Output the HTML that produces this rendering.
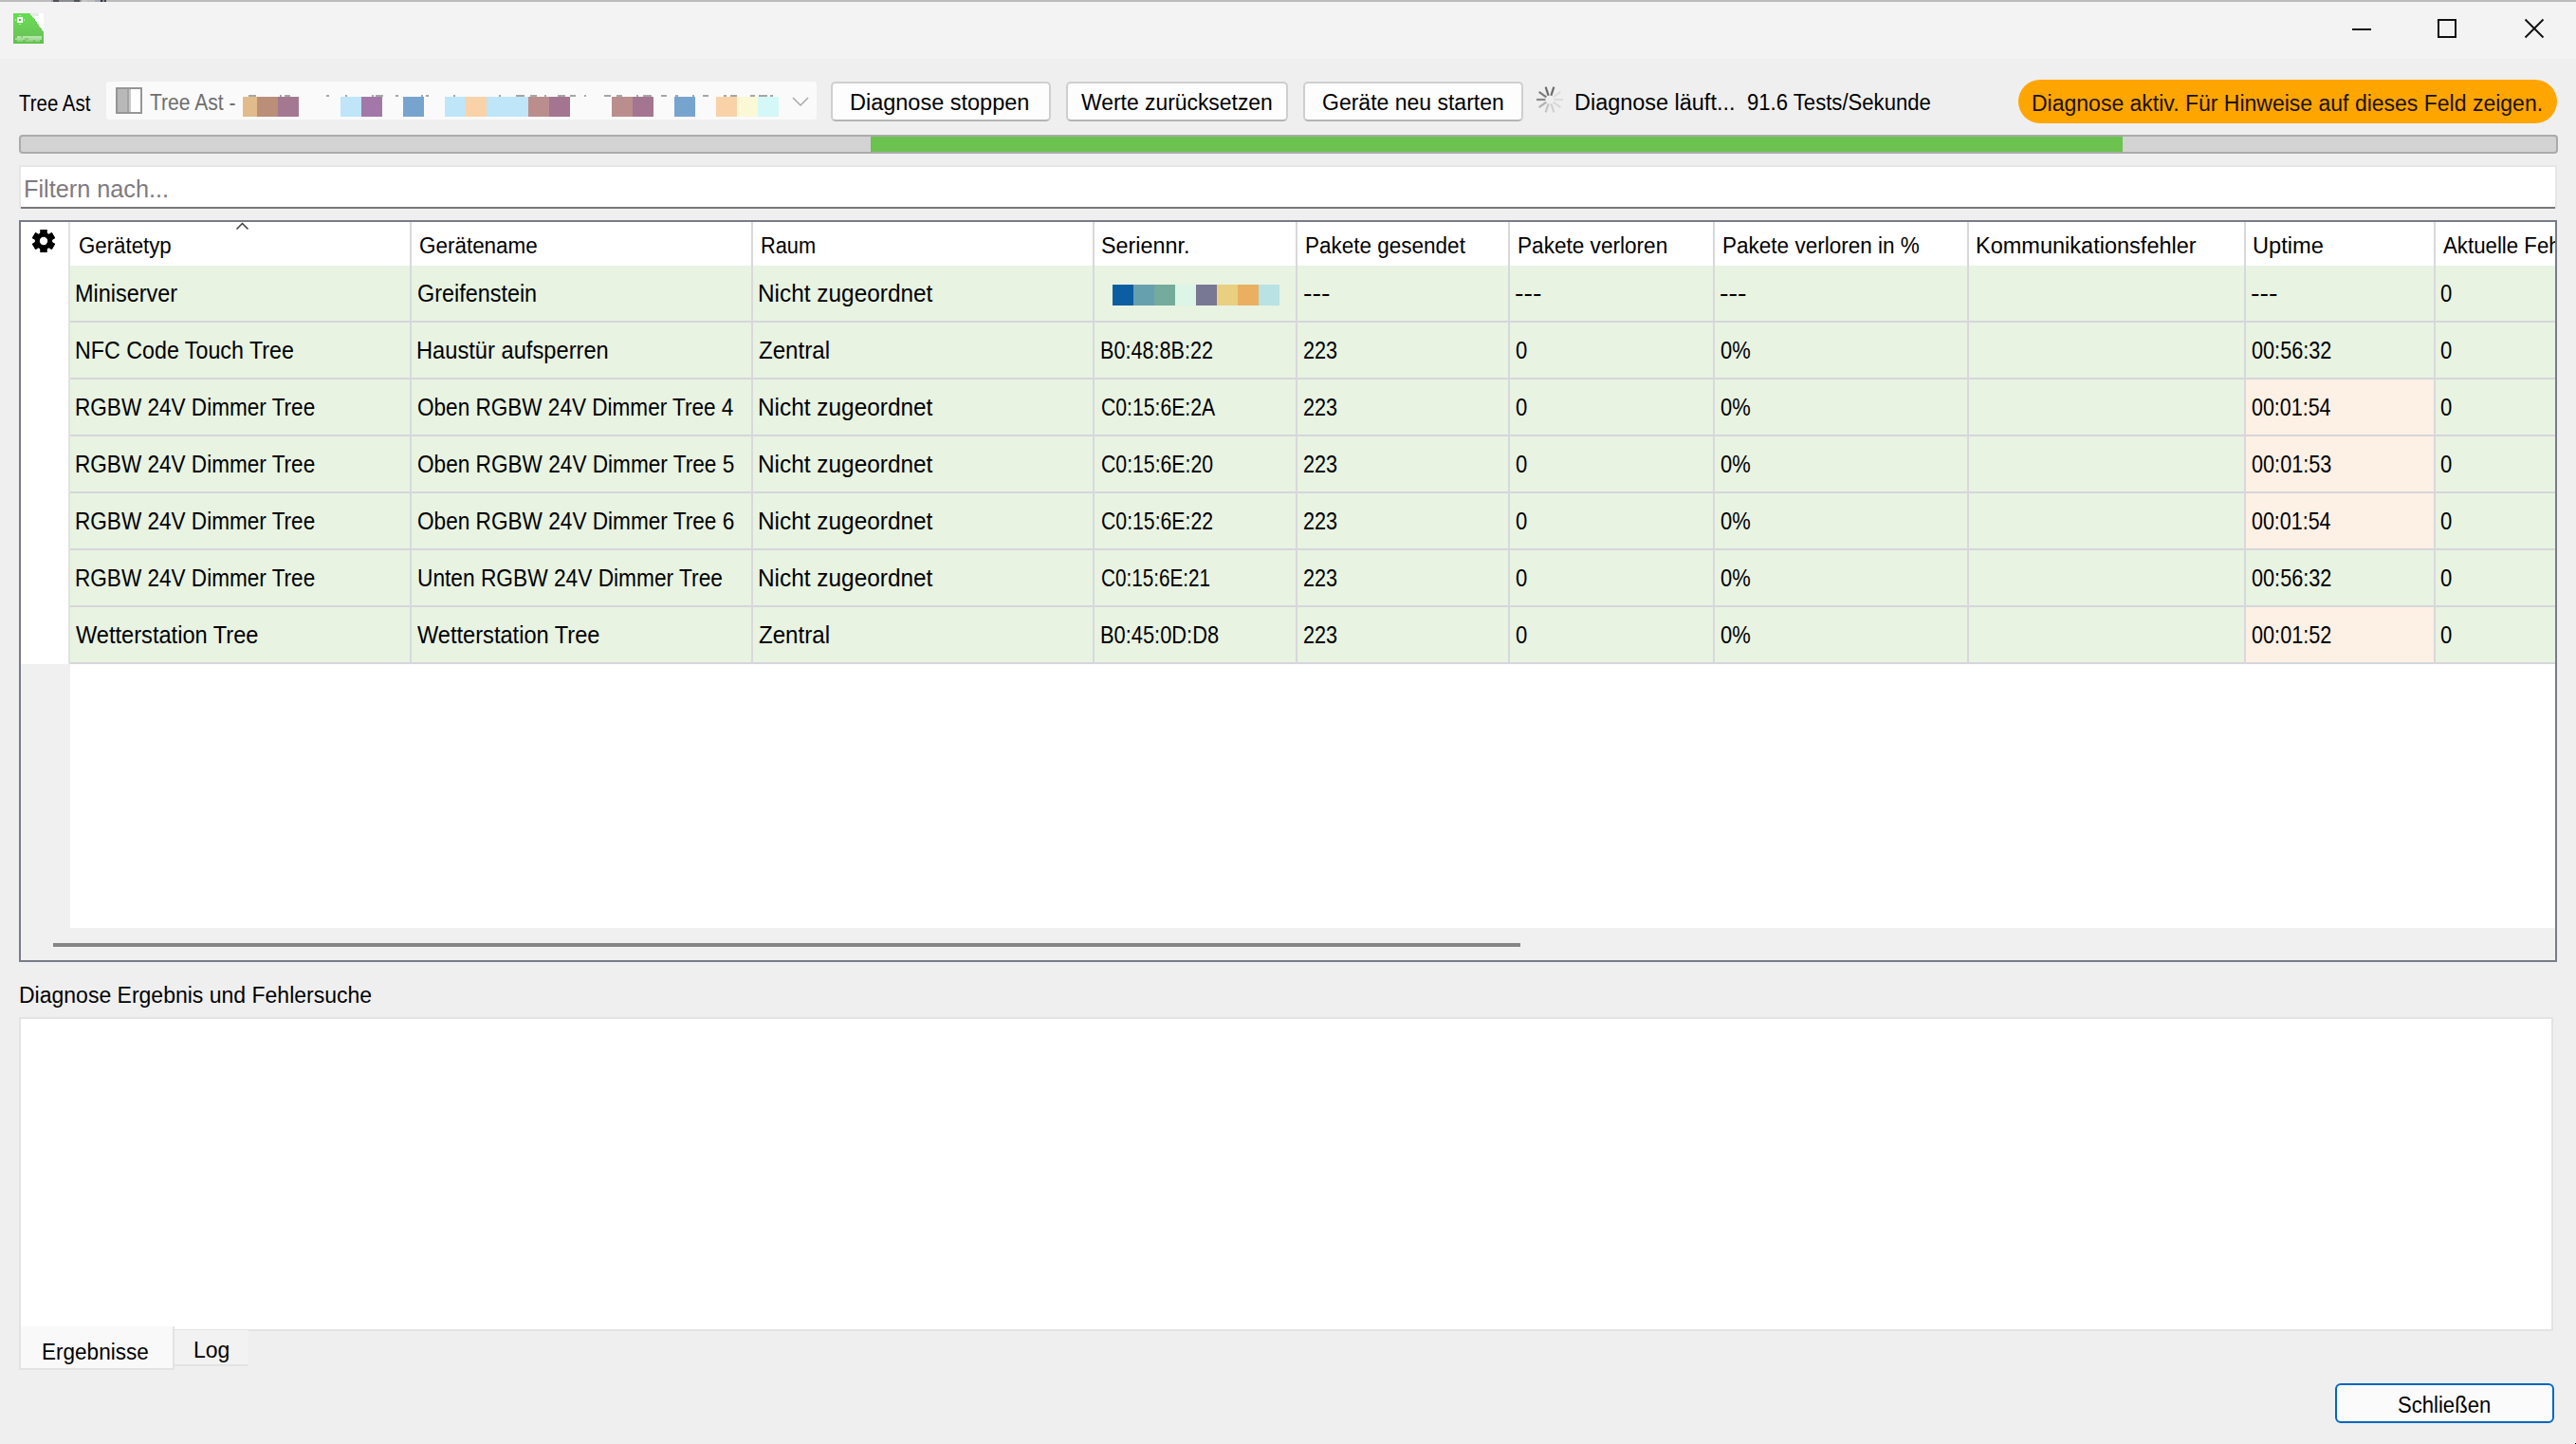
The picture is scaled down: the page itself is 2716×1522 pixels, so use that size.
<!DOCTYPE html>
<html><head><meta charset="utf-8"><style>
html,body{margin:0;padding:0;}
body{width:2716px;height:1522px;background:#efefef;position:relative;overflow:hidden;font-family:"Liberation Sans",sans-serif;}
.r{position:absolute;}
.t{position:absolute;white-space:pre;transform-origin:0 0;}
</style></head><body>
<div class="r" style="left:0px;top:0px;width:2716px;height:62px;background:#f3f3f3;"></div>
<div class="r" style="left:0px;top:0px;width:2716px;height:2px;background:#bcbcbc;"></div>
<div class="r" style="left:54px;top:0px;width:2px;height:2px;background:#a8a8a8;"></div>
<div class="r" style="left:56px;top:0px;width:6px;height:2px;background:#505358;"></div>
<div class="r" style="left:62px;top:0px;width:16px;height:2px;background:#8a8c90;"></div>
<div class="r" style="left:78px;top:0px;width:6px;height:2px;background:#505358;"></div>
<div class="r" style="left:84px;top:0px;width:2px;height:2px;background:#999;"></div>
<div class="r" style="left:86px;top:0px;width:6px;height:2px;background:#c4c4c4;"></div>
<div class="r" style="left:100px;top:0px;width:2px;height:2px;background:#aaa;"></div>
<div class="r" style="left:102px;top:0px;width:4px;height:2px;background:#a0a8c0;"></div>
<div class="r" style="left:106px;top:0px;width:2px;height:2px;background:#333;"></div>
<div class="r" style="left:108px;top:0px;width:2px;height:2px;background:#888;"></div>
<div class="r" style="left:110px;top:0px;width:2px;height:2px;background:#444;"></div>
<div class="r" style="left:2715px;top:1521px;width:1px;height:1px;background:#000;"></div>
<svg class="r" style="left:14px;top:14px" width="32" height="32" viewBox="0 0 32 32" shape-rendering="crispEdges">
<defs><linearGradient id="lg" x1="0" y1="0" x2="0" y2="1"><stop offset="0" stop-color="#5ee04c"/><stop offset="0.3" stop-color="#6ad456"/><stop offset="0.75" stop-color="#68c656"/><stop offset="1" stop-color="#5cc24a"/></linearGradient></defs>
<path d="M0 0H18V2H20V4H22V6H24V8H26V10H28V12H30V14H32V32H0Z" fill="url(#lg)"/>
<path d="M18 0H32V20H30V18H28V16H26V14H24V12H22V10H20V6H18Z" fill="#ffffff" opacity="0"/>
<rect x="18" y="0" width="14" height="20" fill="#fff" opacity="0"/>
<polygon points="18,0 32,0 32,20" fill="#ffffff"/>
<rect x="19" y="0" width="8" height="3" fill="#e9e9e9"/>
<rect x="4" y="4" width="6" height="6" fill="#fff"/><rect x="6" y="6" width="2" height="2" fill="#4cc43a"/>
<rect x="6" y="2" width="2" height="1" fill="#b8eab0"/><rect x="6" y="11" width="2" height="1" fill="#b8eab0"/>
<rect x="2" y="6" width="1" height="2" fill="#b8eab0"/><rect x="11" y="6" width="1" height="2" fill="#b8eab0"/>
<rect x="4" y="24" width="26" height="2" fill="#b4e4a8"/>
<rect x="2" y="26" width="28" height="2" fill="#a8dc9c"/>
<rect x="4" y="28" width="24" height="2" fill="#8fd47f"/>
<rect x="8" y="24" width="2" height="2" fill="#7fcf6c"/><rect x="12" y="26" width="4" height="2" fill="#7fcf6c"/>
<rect x="10" y="28" width="3" height="2" fill="#6cc85a"/><rect x="21" y="28" width="2" height="2" fill="#6cc85a"/>
</svg>
<div class="r" style="left:2480px;top:30px;width:20px;height:2px;background:#111;"></div>
<div class="r" style="left:2570px;top:20px;width:20px;height:20px;background:transparent;box-sizing:border-box;border:2px solid #111;"></div>
<svg class="r" style="left:2660px;top:18px" width="24" height="24" viewBox="0 0 24 24"><path d="M2.5 2.5L21.5 21.5M21.5 2.5L2.5 21.5" stroke="#111" stroke-width="1.9" fill="none"/></svg>
<div class="r" style="left:112px;top:86px;width:749px;height:40px;background:#fafafa;border-radius:3px;"></div>
<svg class="r" style="left:122px;top:92px" width="28" height="28" viewBox="0 0 28 28">
<rect x="1" y="1" width="26" height="26" fill="#fff" stroke="#959595" stroke-width="2"/>
<rect x="2" y="2" width="10" height="24" fill="#b8b8b8"/><rect x="12" y="2" width="2" height="24" fill="#a4a4a4"/><rect x="14" y="2" width="2" height="24" fill="#c8c8c8"/>
</svg>
<div class="r" style="left:256px;top:102px;width:15px;height:21px;background:#e2bb8c;"></div>
<div class="r" style="left:271px;top:102px;width:22px;height:21px;background:#bb8e78;"></div>
<div class="r" style="left:293px;top:102px;width:22px;height:21px;background:#a47890;"></div>
<div class="r" style="left:359px;top:102px;width:22px;height:21px;background:#bee5f8;"></div>
<div class="r" style="left:381px;top:102px;width:22px;height:21px;background:#a278a8;"></div>
<div class="r" style="left:425px;top:102px;width:22px;height:21px;background:#77a4cf;"></div>
<div class="r" style="left:469px;top:102px;width:22px;height:21px;background:#bee5f8;"></div>
<div class="r" style="left:491px;top:102px;width:22px;height:21px;background:#f9d2a8;"></div>
<div class="r" style="left:513px;top:102px;width:44px;height:21px;background:#bee5f8;"></div>
<div class="r" style="left:557px;top:102px;width:22px;height:21px;background:#bb8e8e;"></div>
<div class="r" style="left:579px;top:102px;width:22px;height:21px;background:#a37590;"></div>
<div class="r" style="left:645px;top:102px;width:22px;height:21px;background:#bb8e8e;"></div>
<div class="r" style="left:667px;top:102px;width:22px;height:21px;background:#a37590;"></div>
<div class="r" style="left:711px;top:102px;width:22px;height:21px;background:#77a4cf;"></div>
<div class="r" style="left:755px;top:102px;width:22px;height:21px;background:#f9d2a8;"></div>
<div class="r" style="left:777px;top:102px;width:22px;height:21px;background:#fbf8d5;"></div>
<div class="r" style="left:799px;top:102px;width:22px;height:21px;background:#d4f7f7;"></div>
<div class="r" style="left:262px;top:100px;width:8px;height:2px;background:#8a8a8a;opacity:0.75;"></div>
<div class="r" style="left:295px;top:100px;width:2px;height:2px;background:#8a8a8a;opacity:0.75;"></div>
<div class="r" style="left:300px;top:100px;width:6px;height:2px;background:#8a8a8a;opacity:0.75;"></div>
<div class="r" style="left:344px;top:100px;width:3px;height:2px;background:#8a8a8a;opacity:0.75;"></div>
<div class="r" style="left:364px;top:100px;width:2px;height:2px;background:#8a8a8a;opacity:0.75;"></div>
<div class="r" style="left:392px;top:100px;width:2px;height:2px;background:#8a8a8a;opacity:0.75;"></div>
<div class="r" style="left:396px;top:100px;width:8px;height:2px;background:#8a8a8a;opacity:0.75;"></div>
<div class="r" style="left:417px;top:100px;width:3px;height:2px;background:#8a8a8a;opacity:0.75;"></div>
<div class="r" style="left:444px;top:100px;width:2px;height:2px;background:#8a8a8a;opacity:0.75;"></div>
<div class="r" style="left:449px;top:100px;width:3px;height:2px;background:#8a8a8a;opacity:0.75;"></div>
<div class="r" style="left:478px;top:100px;width:2px;height:2px;background:#8a8a8a;opacity:0.75;"></div>
<div class="r" style="left:526px;top:100px;width:2px;height:2px;background:#8a8a8a;opacity:0.75;"></div>
<div class="r" style="left:544px;top:100px;width:9px;height:2px;background:#8a8a8a;opacity:0.75;"></div>
<div class="r" style="left:559px;top:100px;width:7px;height:2px;background:#8a8a8a;opacity:0.75;"></div>
<div class="r" style="left:574px;top:100px;width:2px;height:2px;background:#8a8a8a;opacity:0.75;"></div>
<div class="r" style="left:588px;top:100px;width:8px;height:2px;background:#8a8a8a;opacity:0.75;"></div>
<div class="r" style="left:601px;top:100px;width:6px;height:2px;background:#8a8a8a;opacity:0.75;"></div>
<div class="r" style="left:616px;top:100px;width:2px;height:2px;background:#8a8a8a;opacity:0.75;"></div>
<div class="r" style="left:637px;top:100px;width:7px;height:2px;background:#8a8a8a;opacity:0.75;"></div>
<div class="r" style="left:650px;top:100px;width:6px;height:2px;background:#8a8a8a;opacity:0.75;"></div>
<div class="r" style="left:671px;top:100px;width:2px;height:2px;background:#8a8a8a;opacity:0.75;"></div>
<div class="r" style="left:678px;top:100px;width:9px;height:2px;background:#8a8a8a;opacity:0.75;"></div>
<div class="r" style="left:697px;top:100px;width:6px;height:2px;background:#8a8a8a;opacity:0.75;"></div>
<div class="r" style="left:712px;top:100px;width:3px;height:2px;background:#8a8a8a;opacity:0.75;"></div>
<div class="r" style="left:730px;top:100px;width:2px;height:2px;background:#8a8a8a;opacity:0.75;"></div>
<div class="r" style="left:741px;top:100px;width:6px;height:2px;background:#8a8a8a;opacity:0.75;"></div>
<div class="r" style="left:763px;top:100px;width:3px;height:2px;background:#8a8a8a;opacity:0.75;"></div>
<div class="r" style="left:770px;top:100px;width:7px;height:2px;background:#8a8a8a;opacity:0.75;"></div>
<div class="r" style="left:791px;top:100px;width:5px;height:2px;background:#8a8a8a;opacity:0.75;"></div>
<div class="r" style="left:800px;top:100px;width:9px;height:2px;background:#8a8a8a;opacity:0.75;"></div>
<div class="r" style="left:812px;top:100px;width:3px;height:2px;background:#8a8a8a;opacity:0.75;"></div>
<svg class="r" style="left:834px;top:101px" width="20" height="13" viewBox="0 0 20 13"><path d="M2 2L10 10L18 2" stroke="#a8a8a8" stroke-width="1.5" fill="none"/></svg>
<div class="r" style="left:876px;top:86px;width:232px;height:42px;background:#fdfdfd;box-sizing:border-box;border:2px solid #cfcfcf;border-bottom-color:#b5b5b5;border-radius:5px;"></div>
<div class="r" style="left:1124px;top:86px;width:234px;height:42px;background:#fdfdfd;box-sizing:border-box;border:2px solid #cfcfcf;border-bottom-color:#b5b5b5;border-radius:5px;"></div>
<div class="r" style="left:1374px;top:86px;width:232px;height:42px;background:#fdfdfd;box-sizing:border-box;border:2px solid #cfcfcf;border-bottom-color:#b5b5b5;border-radius:5px;"></div>
<svg class="r" style="left:1618px;top:89px" width="32" height="32" viewBox="-16 -16 32 32"><line x1="1.39" y1="-4.28" x2="4.33" y2="-13.31" stroke="#6a6a6a" stroke-width="2.2"/><line x1="-1.39" y1="-4.28" x2="-4.33" y2="-13.31" stroke="#6a6a6a" stroke-width="2.2"/><line x1="-3.64" y1="-2.65" x2="-11.33" y2="-8.23" stroke="#7a7a7a" stroke-width="2.2"/><line x1="-4.50" y1="-0.00" x2="-14.00" y2="-0.00" stroke="#8a8a8a" stroke-width="2.2"/><line x1="-3.64" y1="2.65" x2="-11.33" y2="8.23" stroke="#b0b0b0" stroke-width="2.2"/><line x1="-1.39" y1="4.28" x2="-4.33" y2="13.31" stroke="#c4c4c4" stroke-width="2.2"/><line x1="1.39" y1="4.28" x2="4.33" y2="13.31" stroke="#d0d0d0" stroke-width="2.2"/><line x1="3.64" y1="2.65" x2="11.33" y2="8.23" stroke="#d8d8d8" stroke-width="2.2"/><line x1="4.50" y1="-0.00" x2="14.00" y2="-0.00" stroke="#dcdcdc" stroke-width="2.2"/><line x1="3.64" y1="-2.65" x2="11.33" y2="-8.23" stroke="#dedede" stroke-width="2.2"/></svg>
<div class="r" style="left:2128px;top:84px;width:568px;height:46px;background:#ffa500;border-radius:23px;"></div>
<div class="r" style="left:20px;top:142px;width:2677px;height:20px;background:#d3d3d3;box-sizing:border-box;border:2px solid #ababab;border-radius:4px;"></div>
<div class="r" style="left:918px;top:144px;width:1320px;height:16px;background:#6cc24f;"></div>
<div class="r" style="left:20px;top:174px;width:2676px;height:46px;background:#ffffff;box-sizing:border-box;border:2px solid #e6e6e6;border-bottom:none;"></div>
<div class="r" style="left:22px;top:218px;width:2672px;height:2px;background:#787878;"></div>
<div class="r" style="left:20px;top:232px;width:2676px;height:782px;background:#ffffff;box-sizing:border-box;border:2px solid #787c88;"></div>
<div class="r" style="left:22px;top:700px;width:52px;height:278px;background:#f0f0f0;"></div>
<div class="r" style="left:22px;top:978px;width:2672px;height:34px;background:#f0f0f0;"></div>
<div class="r" style="left:56px;top:994px;width:1547px;height:4px;background:#858585;"></div>
<div class="r" style="left:74px;top:280px;width:2620px;height:58px;background:#e8f3e2;"></div>
<div class="r" style="left:74px;top:338px;width:2620px;height:2px;background:#d6d6da;"></div>
<div class="r" style="left:74px;top:340px;width:2620px;height:58px;background:#e8f3e2;"></div>
<div class="r" style="left:74px;top:398px;width:2620px;height:2px;background:#d6d6da;"></div>
<div class="r" style="left:74px;top:400px;width:2620px;height:58px;background:#e8f3e2;"></div>
<div class="r" style="left:74px;top:458px;width:2620px;height:2px;background:#d6d6da;"></div>
<div class="r" style="left:2368px;top:400px;width:199px;height:58px;background:#fdf0e4;"></div>
<div class="r" style="left:74px;top:460px;width:2620px;height:58px;background:#e8f3e2;"></div>
<div class="r" style="left:74px;top:518px;width:2620px;height:2px;background:#d6d6da;"></div>
<div class="r" style="left:2368px;top:460px;width:199px;height:58px;background:#fdf0e4;"></div>
<div class="r" style="left:74px;top:520px;width:2620px;height:58px;background:#e8f3e2;"></div>
<div class="r" style="left:74px;top:578px;width:2620px;height:2px;background:#d6d6da;"></div>
<div class="r" style="left:2368px;top:520px;width:199px;height:58px;background:#fdf0e4;"></div>
<div class="r" style="left:74px;top:580px;width:2620px;height:58px;background:#e8f3e2;"></div>
<div class="r" style="left:74px;top:638px;width:2620px;height:2px;background:#d6d6da;"></div>
<div class="r" style="left:74px;top:640px;width:2620px;height:58px;background:#e8f3e2;"></div>
<div class="r" style="left:74px;top:698px;width:2620px;height:2px;background:#d6d6da;"></div>
<div class="r" style="left:2368px;top:640px;width:199px;height:58px;background:#fdf0e4;"></div>
<div class="r" style="left:72px;top:234px;width:2px;height:466px;background:#e2e2e2;"></div>
<div class="r" style="left:432px;top:234px;width:2px;height:466px;background:#d8d8dc;"></div>
<div class="r" style="left:792px;top:234px;width:2px;height:466px;background:#d8d8dc;"></div>
<div class="r" style="left:1152px;top:234px;width:2px;height:466px;background:#d8d8dc;"></div>
<div class="r" style="left:1366px;top:234px;width:2px;height:466px;background:#d8d8dc;"></div>
<div class="r" style="left:1590px;top:234px;width:2px;height:466px;background:#d8d8dc;"></div>
<div class="r" style="left:1806px;top:234px;width:2px;height:466px;background:#d8d8dc;"></div>
<div class="r" style="left:2074px;top:234px;width:2px;height:466px;background:#d8d8dc;"></div>
<div class="r" style="left:2366px;top:234px;width:2px;height:466px;background:#d8d8dc;"></div>
<div class="r" style="left:2566px;top:234px;width:2px;height:466px;background:#d8d8dc;"></div>
<svg class="r" style="left:34px;top:242px" width="24" height="24" viewBox="0 0 24 24"><g fill="#000"><rect x="8.5" y="0" width="7" height="24" transform="rotate(0 12 12)"/><rect x="8.5" y="0" width="7" height="24" transform="rotate(60 12 12)"/><rect x="8.5" y="0" width="7" height="24" transform="rotate(120 12 12)"/><rect x="8.5" y="0" width="7" height="24" transform="rotate(180 12 12)"/><rect x="8.5" y="0" width="7" height="24" transform="rotate(240 12 12)"/><rect x="8.5" y="0" width="7" height="24" transform="rotate(300 12 12)"/><circle cx="12" cy="12" r="9.2"/></g><circle cx="12" cy="12" r="4.2" fill="#fff"/></svg>
<svg class="r" style="left:246px;top:232px" width="20" height="14" viewBox="0 0 20 14"><path d="M3.5 9.5L9.5 3.5L15.5 9.5" stroke="#3c3c3c" stroke-width="1.5" fill="none"/></svg>
<div class="r" style="left:1173px;top:300px;width:22px;height:22px;background:#0b5fa0;"></div>
<div class="r" style="left:1195px;top:300px;width:22px;height:22px;background:#66a0ae;"></div>
<div class="r" style="left:1217px;top:300px;width:22px;height:22px;background:#74ab9c;"></div>
<div class="r" style="left:1239px;top:300px;width:22px;height:22px;background:#dcf5e6;"></div>
<div class="r" style="left:1261px;top:300px;width:22px;height:22px;background:#787894;"></div>
<div class="r" style="left:1283px;top:300px;width:22px;height:22px;background:#e8d080;"></div>
<div class="r" style="left:1305px;top:300px;width:22px;height:22px;background:#e8b060;"></div>
<div class="r" style="left:1327px;top:300px;width:22px;height:22px;background:#b8e2e4;"></div>
<div class="r" style="left:20px;top:1072px;width:2672px;height:331px;background:#ffffff;box-sizing:border-box;border:2px solid #e3e3e3;"></div>
<div class="r" style="left:184px;top:1402px;width:78px;height:38px;background:#f2f2f2;box-sizing:border-box;border-bottom:2px solid #e3e3e3;"></div>
<div class="r" style="left:20px;top:1398px;width:164px;height:46px;background:#f9f9f9;box-sizing:border-box;border:2px solid #e3e3e3;border-top:none;"></div>
<div class="r" style="left:2462px;top:1458px;width:231px;height:42px;background:#fbfbfb;box-sizing:border-box;border:2px solid #0067c0;border-radius:6px;"></div>
<div class="t" style="left:20.00px;top:97.53px;font-size:23.0px;line-height:23.0px;color:#000;transform:scaleX(0.8884);">Tree Ast</div>
<div class="t" style="left:158.00px;top:96.83px;font-size:23.0px;line-height:23.0px;color:#6e6e6e;transform:scaleX(0.9150);">Tree Ast -</div>
<div class="t" style="left:896.48px;top:97.33px;font-size:23.0px;line-height:23.0px;color:#000;transform:scaleX(1.0211);">Diagnose stoppen</div>
<div class="t" style="left:1140.00px;top:97.33px;font-size:23.0px;line-height:23.0px;color:#000;transform:scaleX(0.9949);">Werte zurücksetzen</div>
<div class="t" style="left:1394.00px;top:97.33px;font-size:23.0px;line-height:23.0px;color:#000;">Geräte neu starten</div>
<div class="t" style="left:1659.98px;top:97.33px;font-size:23.0px;line-height:23.0px;color:#000;transform:scaleX(1.0194);">Diagnose läuft...</div>
<div class="t" style="left:1841.54px;top:97.33px;font-size:23.0px;line-height:23.0px;color:#000;transform:scaleX(0.9614);">91.6 Tests/Sekunde</div>
<div class="t" style="left:2142.00px;top:97.53px;font-size:23.0px;line-height:23.0px;color:#1a1200;">Diagnose aktiv. Für Hinweise auf dieses Feld zeigen.</div>
<div class="t" style="left:25.01px;top:186.99px;font-size:25.4px;line-height:25.4px;color:#7d7a80;transform:scaleX(0.9949);">Filtern nach...</div>
<div class="t" style="left:83.03px;top:247.53px;font-size:23.0px;line-height:23.0px;color:#000;transform:scaleX(0.9677);">Gerätetyp</div>
<div class="t" style="left:441.52px;top:247.53px;font-size:23.0px;line-height:23.0px;color:#000;transform:scaleX(0.9758);">Gerätename</div>
<div class="t" style="left:802.05px;top:247.53px;font-size:23.0px;line-height:23.0px;color:#000;transform:scaleX(0.9461);">Raum</div>
<div class="t" style="left:1160.99px;top:247.53px;font-size:23.0px;line-height:23.0px;color:#000;transform:scaleX(1.0149);">Seriennr.</div>
<div class="t" style="left:1376.02px;top:247.53px;font-size:23.0px;line-height:23.0px;color:#000;transform:scaleX(0.9783);">Pakete gesendet</div>
<div class="t" style="left:1600.02px;top:247.53px;font-size:23.0px;line-height:23.0px;color:#000;transform:scaleX(0.9824);">Pakete verloren</div>
<div class="t" style="left:1816.02px;top:247.53px;font-size:23.0px;line-height:23.0px;color:#000;transform:scaleX(0.9793);">Pakete verloren in %</div>
<div class="t" style="left:2082.98px;top:247.53px;font-size:23.0px;line-height:23.0px;color:#000;transform:scaleX(1.0225);">Kommunikationsfehler</div>
<div class="t" style="left:2374.97px;top:247.53px;font-size:23.0px;line-height:23.0px;color:#000;transform:scaleX(1.0273);">Uptime</div>
<div class="t" style="left:2575.50px;top:247.53px;font-size:23.0px;line-height:23.0px;color:#000;transform:scaleX(0.9671);">Aktuelle Fehler</div>
<div class="t" style="left:79.12px;top:296.83px;font-size:25.0px;line-height:25.0px;color:#000;transform:scaleX(0.9383);">Miniserver</div>
<div class="t" style="left:440.06px;top:296.83px;font-size:25.0px;line-height:25.0px;color:#000;transform:scaleX(0.9354);">Greifenstein</div>
<div class="t" style="left:799.05px;top:296.83px;font-size:25.0px;line-height:25.0px;color:#000;transform:scaleX(0.9756);">Nicht zugeordnet</div>
<div class="t" style="left:1373.86px;top:296.83px;font-size:25.0px;line-height:25.0px;color:#000;transform:scaleX(1.1416);">---</div>
<div class="t" style="left:1596.86px;top:296.83px;font-size:25.0px;line-height:25.0px;color:#000;transform:scaleX(1.1416);">---</div>
<div class="t" style="left:1812.86px;top:296.83px;font-size:25.0px;line-height:25.0px;color:#000;transform:scaleX(1.1416);">---</div>
<div class="t" style="left:2372.86px;top:296.83px;font-size:25.0px;line-height:25.0px;color:#000;transform:scaleX(1.1416);">---</div>
<div class="t" style="left:2573.00px;top:296.83px;font-size:25.0px;line-height:25.0px;color:#000;transform:scaleX(0.8846);">0</div>
<div class="t" style="left:79.14px;top:356.83px;font-size:25.0px;line-height:25.0px;color:#000;transform:scaleX(0.9299);">NFC Code Touch Tree</div>
<div class="t" style="left:439.11px;top:356.83px;font-size:25.0px;line-height:25.0px;color:#000;transform:scaleX(0.9474);">Haustür aufsperren</div>
<div class="t" style="left:800.00px;top:356.83px;font-size:25.0px;line-height:25.0px;color:#000;transform:scaleX(0.9639);">Zentral</div>
<div class="t" style="left:1160.27px;top:356.83px;font-size:25.0px;line-height:25.0px;color:#000;transform:scaleX(0.8641);">B0:48:8B:22</div>
<div class="t" style="left:1374.13px;top:356.83px;font-size:25.0px;line-height:25.0px;color:#000;transform:scaleX(0.8667);">223</div>
<div class="t" style="left:1598.00px;top:356.83px;font-size:25.0px;line-height:25.0px;color:#000;transform:scaleX(0.8846);">0</div>
<div class="t" style="left:1814.00px;top:356.83px;font-size:25.0px;line-height:25.0px;color:#000;transform:scaleX(0.8773);">0%</div>
<div class="t" style="left:2374.00px;top:356.83px;font-size:25.0px;line-height:25.0px;color:#000;transform:scaleX(0.8671);">00:56:32</div>
<div class="t" style="left:2573.00px;top:356.83px;font-size:25.0px;line-height:25.0px;color:#000;transform:scaleX(0.8846);">0</div>
<div class="t" style="left:79.20px;top:416.83px;font-size:25.0px;line-height:25.0px;color:#000;transform:scaleX(0.9024);">RGBW 24V Dimmer Tree</div>
<div class="t" style="left:440.10px;top:416.83px;font-size:25.0px;line-height:25.0px;color:#000;transform:scaleX(0.9022);">Oben RGBW 24V Dimmer Tree 4</div>
<div class="t" style="left:799.05px;top:416.83px;font-size:25.0px;line-height:25.0px;color:#000;transform:scaleX(0.9756);">Nicht zugeordnet</div>
<div class="t" style="left:1161.15px;top:416.83px;font-size:25.0px;line-height:25.0px;color:#000;transform:scaleX(0.8477);">C0:15:6E:2A</div>
<div class="t" style="left:1374.13px;top:416.83px;font-size:25.0px;line-height:25.0px;color:#000;transform:scaleX(0.8667);">223</div>
<div class="t" style="left:1598.00px;top:416.83px;font-size:25.0px;line-height:25.0px;color:#000;transform:scaleX(0.8846);">0</div>
<div class="t" style="left:1814.00px;top:416.83px;font-size:25.0px;line-height:25.0px;color:#000;transform:scaleX(0.8773);">0%</div>
<div class="t" style="left:2374.00px;top:416.83px;font-size:25.0px;line-height:25.0px;color:#000;transform:scaleX(0.8582);">00:01:54</div>
<div class="t" style="left:2573.00px;top:416.83px;font-size:25.0px;line-height:25.0px;color:#000;transform:scaleX(0.8846);">0</div>
<div class="t" style="left:79.20px;top:476.83px;font-size:25.0px;line-height:25.0px;color:#000;transform:scaleX(0.9024);">RGBW 24V Dimmer Tree</div>
<div class="t" style="left:440.10px;top:476.83px;font-size:25.0px;line-height:25.0px;color:#000;transform:scaleX(0.9046);">Oben RGBW 24V Dimmer Tree 5</div>
<div class="t" style="left:799.05px;top:476.83px;font-size:25.0px;line-height:25.0px;color:#000;transform:scaleX(0.9756);">Nicht zugeordnet</div>
<div class="t" style="left:1161.15px;top:476.83px;font-size:25.0px;line-height:25.0px;color:#000;transform:scaleX(0.8491);">C0:15:6E:20</div>
<div class="t" style="left:1374.13px;top:476.83px;font-size:25.0px;line-height:25.0px;color:#000;transform:scaleX(0.8667);">223</div>
<div class="t" style="left:1598.00px;top:476.83px;font-size:25.0px;line-height:25.0px;color:#000;transform:scaleX(0.8846);">0</div>
<div class="t" style="left:1814.00px;top:476.83px;font-size:25.0px;line-height:25.0px;color:#000;transform:scaleX(0.8773);">0%</div>
<div class="t" style="left:2374.00px;top:476.83px;font-size:25.0px;line-height:25.0px;color:#000;transform:scaleX(0.8671);">00:01:53</div>
<div class="t" style="left:2573.00px;top:476.83px;font-size:25.0px;line-height:25.0px;color:#000;transform:scaleX(0.8846);">0</div>
<div class="t" style="left:79.20px;top:536.83px;font-size:25.0px;line-height:25.0px;color:#000;transform:scaleX(0.9024);">RGBW 24V Dimmer Tree</div>
<div class="t" style="left:440.10px;top:536.83px;font-size:25.0px;line-height:25.0px;color:#000;transform:scaleX(0.9046);">Oben RGBW 24V Dimmer Tree 6</div>
<div class="t" style="left:799.05px;top:536.83px;font-size:25.0px;line-height:25.0px;color:#000;transform:scaleX(0.9756);">Nicht zugeordnet</div>
<div class="t" style="left:1161.15px;top:536.83px;font-size:25.0px;line-height:25.0px;color:#000;transform:scaleX(0.8491);">C0:15:6E:22</div>
<div class="t" style="left:1374.13px;top:536.83px;font-size:25.0px;line-height:25.0px;color:#000;transform:scaleX(0.8667);">223</div>
<div class="t" style="left:1598.00px;top:536.83px;font-size:25.0px;line-height:25.0px;color:#000;transform:scaleX(0.8846);">0</div>
<div class="t" style="left:1814.00px;top:536.83px;font-size:25.0px;line-height:25.0px;color:#000;transform:scaleX(0.8773);">0%</div>
<div class="t" style="left:2374.00px;top:536.83px;font-size:25.0px;line-height:25.0px;color:#000;transform:scaleX(0.8582);">00:01:54</div>
<div class="t" style="left:2573.00px;top:536.83px;font-size:25.0px;line-height:25.0px;color:#000;transform:scaleX(0.8846);">0</div>
<div class="t" style="left:79.20px;top:596.83px;font-size:25.0px;line-height:25.0px;color:#000;transform:scaleX(0.9024);">RGBW 24V Dimmer Tree</div>
<div class="t" style="left:440.09px;top:596.83px;font-size:25.0px;line-height:25.0px;color:#000;transform:scaleX(0.9087);">Unten RGBW 24V Dimmer Tree</div>
<div class="t" style="left:799.05px;top:596.83px;font-size:25.0px;line-height:25.0px;color:#000;transform:scaleX(0.9756);">Nicht zugeordnet</div>
<div class="t" style="left:1161.17px;top:596.83px;font-size:25.0px;line-height:25.0px;color:#000;transform:scaleX(0.8272);">C0:15:6E:21</div>
<div class="t" style="left:1374.13px;top:596.83px;font-size:25.0px;line-height:25.0px;color:#000;transform:scaleX(0.8667);">223</div>
<div class="t" style="left:1598.00px;top:596.83px;font-size:25.0px;line-height:25.0px;color:#000;transform:scaleX(0.8846);">0</div>
<div class="t" style="left:1814.00px;top:596.83px;font-size:25.0px;line-height:25.0px;color:#000;transform:scaleX(0.8773);">0%</div>
<div class="t" style="left:2374.00px;top:596.83px;font-size:25.0px;line-height:25.0px;color:#000;transform:scaleX(0.8671);">00:56:32</div>
<div class="t" style="left:2573.00px;top:596.83px;font-size:25.0px;line-height:25.0px;color:#000;transform:scaleX(0.8846);">0</div>
<div class="t" style="left:80.00px;top:656.83px;font-size:25.0px;line-height:25.0px;color:#000;transform:scaleX(0.9442);">Wetterstation Tree</div>
<div class="t" style="left:440.00px;top:656.83px;font-size:25.0px;line-height:25.0px;color:#000;transform:scaleX(0.9442);">Wetterstation Tree</div>
<div class="t" style="left:800.00px;top:656.83px;font-size:25.0px;line-height:25.0px;color:#000;transform:scaleX(0.9639);">Zentral</div>
<div class="t" style="left:1160.25px;top:656.83px;font-size:25.0px;line-height:25.0px;color:#000;transform:scaleX(0.8742);">B0:45:0D:D8</div>
<div class="t" style="left:1374.13px;top:656.83px;font-size:25.0px;line-height:25.0px;color:#000;transform:scaleX(0.8667);">223</div>
<div class="t" style="left:1598.00px;top:656.83px;font-size:25.0px;line-height:25.0px;color:#000;transform:scaleX(0.8846);">0</div>
<div class="t" style="left:1814.00px;top:656.83px;font-size:25.0px;line-height:25.0px;color:#000;transform:scaleX(0.8773);">0%</div>
<div class="t" style="left:2374.00px;top:656.83px;font-size:25.0px;line-height:25.0px;color:#000;transform:scaleX(0.8671);">00:01:52</div>
<div class="t" style="left:2573.00px;top:656.83px;font-size:25.0px;line-height:25.0px;color:#000;transform:scaleX(0.8846);">0</div>
<div class="t" style="left:20.00px;top:1037.53px;font-size:23.0px;line-height:23.0px;color:#000;">Diagnose Ergebnis und Fehlersuche</div>
<div class="t" style="left:44.02px;top:1413.53px;font-size:23.0px;line-height:23.0px;color:#000;transform:scaleX(0.9799);">Ergebnisse</div>
<div class="t" style="left:204.00px;top:1411.53px;font-size:23.0px;line-height:23.0px;color:#000;transform:scaleX(0.9977);">Log</div>
<div class="t" style="left:2527.54px;top:1469.53px;font-size:23.0px;line-height:23.0px;color:#000;transform:scaleX(0.9603);">Schließen</div>
<div class="r" style="left:2694px;top:232px;width:2px;height:782px;background:#787c88"></div>
<div class="r" style="left:2696px;top:220px;width:20px;height:70px;background:#efefef"></div>
</body></html>
